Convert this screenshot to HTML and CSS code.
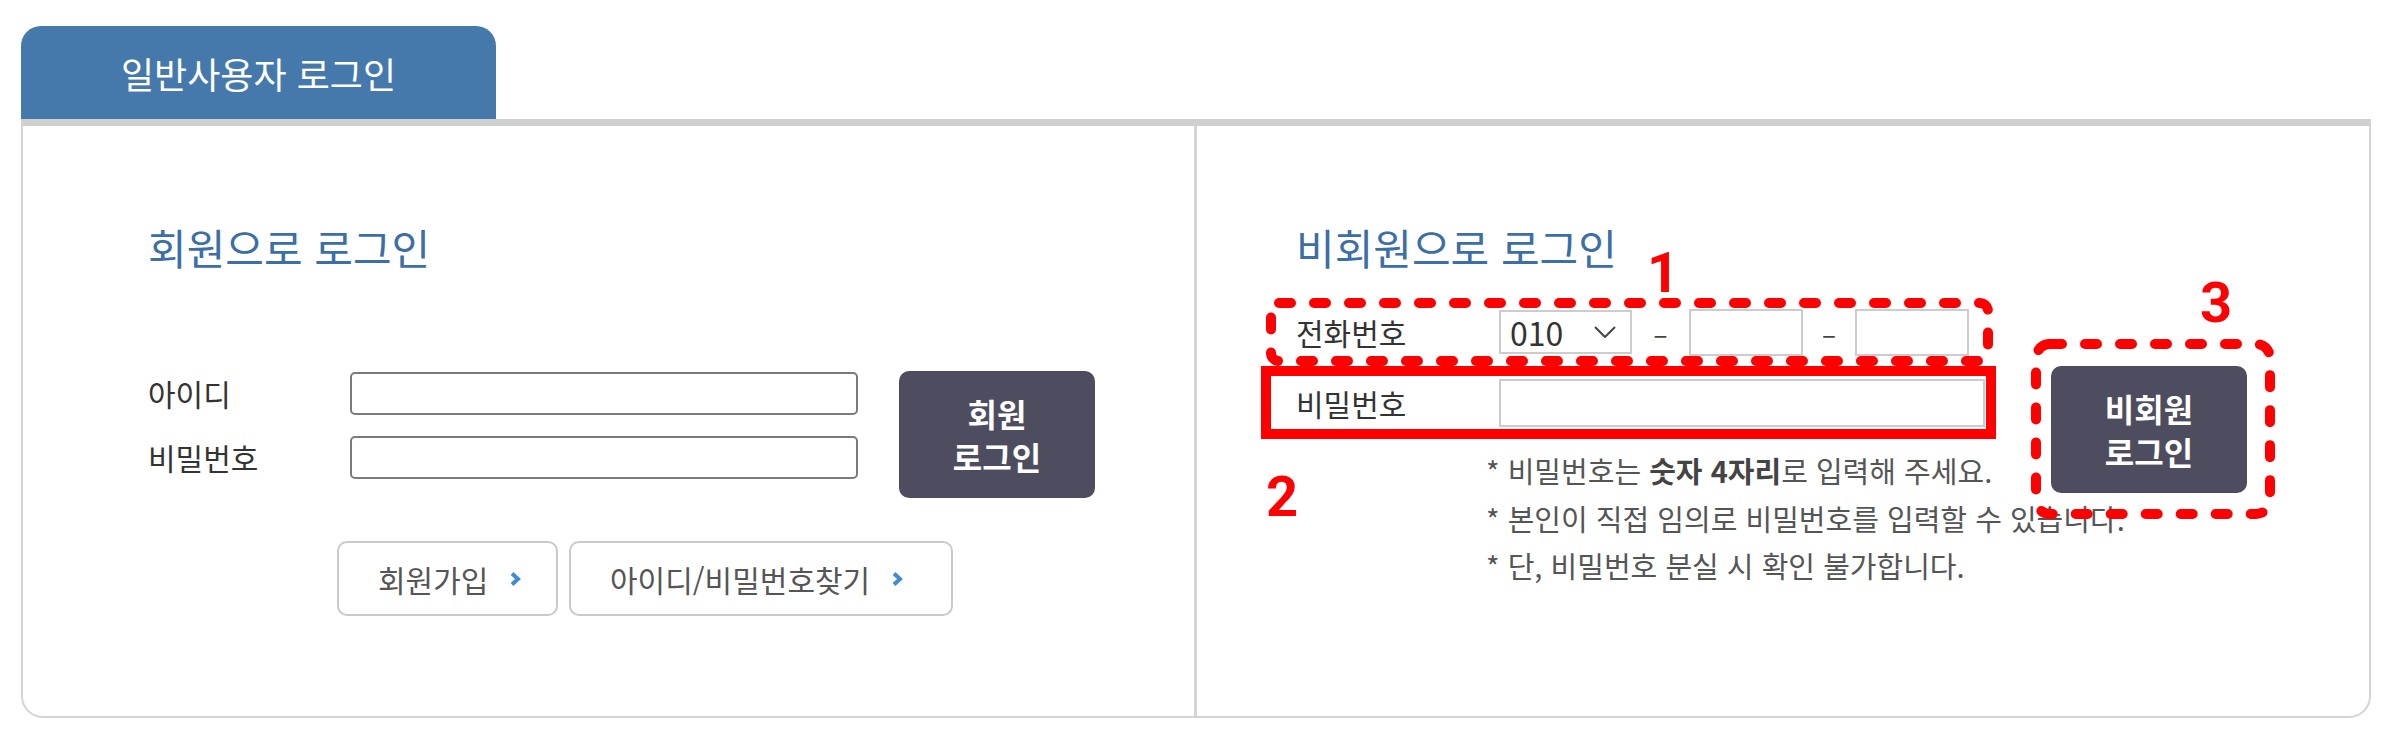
FILE: index.html
```html
<!DOCTYPE html>
<html lang="ko">
<head>
  <meta charset="UTF-8" />
  <meta name="viewport" content="width=device-width, initial-scale=1.0"/>
  <title>로그인</title>
  <link rel="stylesheet" href="styles.css">
</head>
<body>
  <div class="login-wrap">
    <div class="tab">일반사용자 로그인</div>

    <div class="login-box">
      <!-- 회원 -->
      <div class="panel member">
        <h3 class="panel-title">회원으로 로그인</h3>

        <div class="member-form">
          <div class="fields">
            <label for="user-id">아이디</label>
            <input type="text" id="user-id"/>
            <label for="user-pw">비밀번호</label>
            <input type="password" id="user-pw"/>
          </div>
          <button class="btn-login"><span>회원</span><span>로그인</span></button>
        </div>

        <div class="link-group">
          <a class="link-btn join" href="#">회원가입
            <svg width="14" height="18" viewBox="0 0 14 18"><polyline points="4,3.5 10,9 4,14.5"/></svg>
          </a>
          <a class="link-btn find" href="#">아이디/비밀번호찾기
            <svg width="14" height="18" viewBox="0 0 14 18"><polyline points="4,3.5 10,9 4,14.5"/></svg>
          </a>
        </div>
      </div>

      <!-- 비회원 -->
      <div class="panel guest">
        <h3 class="panel-title">비회원으로 로그인</h3>

        <div class="guest-body">
          <div class="guest-fields">
            <div class="mark row-phone">
              <svg class="mark-line" width="727" height="68"><rect x="5" y="5" width="717" height="58" rx="8"/></svg>
              <span class="mark-num num1">1</span>
              <label for="phone1">전화번호</label>
              <div class="select-box" id="phone1">
                <span>010</span>
                <svg width="22" height="12" viewBox="0 0 22 12"><polyline points="1,1 11,11 21,1"/></svg>
              </div>
              <span class="dash dash1">–</span>
              <input type="text" class="phone"/>
              <span class="dash dash2">–</span>
              <input type="text" class="phone"/>
            </div>

            <div class="mark row-pw">
              <span class="mark-num num2">2</span>
              <label for="guest-pw">비밀번호</label>
              <input type="password" id="guest-pw" class="pw"/>
            </div>

            <ul class="notes">
              <li>* 비밀번호는 <b>숫자 4자리</b>로 입력해 주세요.</li>
              <li>* 본인이 직접 임의로 비밀번호를 입력할 수 있습니다.</li>
              <li>* 단, 비밀번호 분실 시 확인 불가합니다.</li>
            </ul>
          </div>

          <div class="mark row-btn">
            <svg class="mark-line" width="244" height="180"><rect x="5" y="5" width="234" height="170" rx="14"/></svg>
            <span class="mark-num num3">3</span>
            <button class="btn-login"><span>비회원</span><span>로그인</span></button>
          </div>
        </div>
      </div>
    </div>
  </div>
</body>
</html>
```

FILE: styles.css
```css
body {
  margin: 0;
  font-family: "Noto Sans CJK KR", "Noto Sans", sans-serif;
  color: #333;
  background-color: #fff;
}
.login-wrap {
  padding: 26px 0 0 21px;
  width: 2350px;
}
.tab {
  width: 475px;
  height: 93px;
  background-color: #4579ab;
  color: #fff;
  font-size: 36px;
  border-radius: 20px 20px 0 0;
  display: flex;
  align-items: center;
  justify-content: center;
}
.login-box {
  display: flex;
  height: 599px;
  box-sizing: border-box;
  border: 2px solid #d4d4d4;
  border-top: 7px solid #cfcfcf;
  border-radius: 0 0 22px 22px;
}
.panel.member {
  width: 1171px;
  padding-left: 125px;
  box-sizing: border-box;
}
.panel.guest {
  flex: 1;
  border-left: 3px solid #d6d6d6;
  padding-left: 64px;
}
.panel-title {
  margin: 95px 0 0;
  font-size: 42px;
  line-height: 52px;
  font-weight: normal;
  color: #3b6fa5;
}
.guest .panel-title {
  margin-left: 35px;
}
label {
  font-size: 30px;
  color: #333;
}
input {
  box-sizing: border-box;
  font-family: inherit;
}

/* member */
.member-form {
  display: flex;
  align-items: flex-start;
  margin-top: 98px;
}
.fields {
  display: grid;
  grid-template-columns: 202px 508px;
  row-gap: 20px;
  align-items: center;
}
.fields input {
  height: 43px;
  border: 2px solid #7b7b7b;
  border-radius: 5px;
}
.btn-login {
  display: flex;
  flex-direction: column;
  align-items: center;
  justify-content: center;
  gap: 1px;
  width: 196px;
  height: 127px;
  margin-left: 41px;
  padding: 0;
  background-color: #4e4d5f;
  color: #fff;
  border: none;
  border-radius: 10px;
  font-family: inherit;
  font-size: 32px;
  font-weight: bold;
  line-height: 42px;
}
.link-group {
  display: flex;
  gap: 11px;
  margin: 43px 0 0 189px;
}
.link-btn {
  display: flex;
  align-items: center;
  gap: 20px;
  height: 75px;
  box-sizing: border-box;
  padding: 0 0 0 39px;
  border: 2px solid #c9c9c9;
  border-radius: 10px;
  font-size: 30px;
  color: #555;
  text-decoration: none;
}
.link-btn.join {
  width: 221px;
}
.link-btn.find {
  width: 384px;
}
.link-btn svg polyline {
  fill: none;
  stroke: #3f8ccf;
  stroke-width: 4;
}

/* guest */
.guest-body {
  display: flex;
  align-items: flex-start;
  margin-top: 25px;
}
.guest-fields {
  width: 735px;
  flex-shrink: 0;
}
.mark {
  position: relative;
  box-sizing: border-box;
}
.mark-line {
  position: absolute;
  top: 0;
  left: 0;
}
.mark-line rect {
  fill: none;
  stroke: #f00;
  stroke-width: 10;
  stroke-linecap: round;
  stroke-dasharray: 12 23;
}
.mark-num {
  position: absolute;
  font-family: Roboto, "Noto Sans", sans-serif;
  font-size: 56px;
  font-weight: bold;
  line-height: 1;
  color: #f00;
}
.row-phone {
  display: flex;
  align-items: center;
  height: 68px;
  margin: 0 3px 0 5px;
  padding-left: 30px;
}
.row-phone label,
.row-pw label {
  width: 203px;
  flex-shrink: 0;
}
.select-box {
  display: flex;
  align-items: center;
  justify-content: space-between;
  width: 133px;
  height: 44px;
  box-sizing: border-box;
  padding: 0 14px 0 9px;
  border: 2px solid #ccc;
  font-size: 32px;
  color: #333;
}
.select-box svg polyline {
  fill: none;
  stroke: #444;
  stroke-width: 2;
}
.dash {
  font-size: 26px;
  color: #444;
  text-align: center;
}
.dash1 {
  width: 57px;
}
.dash2 {
  width: 52px;
}
.phone {
  width: 114px;
  height: 47px;
  border: 2px solid #ccc;
}
.row-pw {
  display: flex;
  align-items: center;
  height: 73px;
  padding: 0 1px 0 25px;
  border: 10px solid #f00;
}
.pw {
  flex: 1;
  height: 48px;
  border: 2px solid #ccc;
}
.notes {
  list-style: none;
  margin: 8px 0 0 225px;
  padding: 0;
  font-size: 29px;
  line-height: 47.5px;
  color: #555;
  white-space: nowrap;
}
.notes b {
  color: #444;
}
.row-btn {
  width: 244px;
  height: 180px;
  margin: 41px 0 0 35px;
  padding: 27px 0 0 20px;
}
.row-btn .btn-login {
  position: relative;
  margin-left: 0;
}
.num1 {
  top: -53px;
  left: 381px;
}
.num2 {
  top: 93px;
  left: -5px;
}
.num3 {
  top: -64px;
  left: 169px;
}
```
